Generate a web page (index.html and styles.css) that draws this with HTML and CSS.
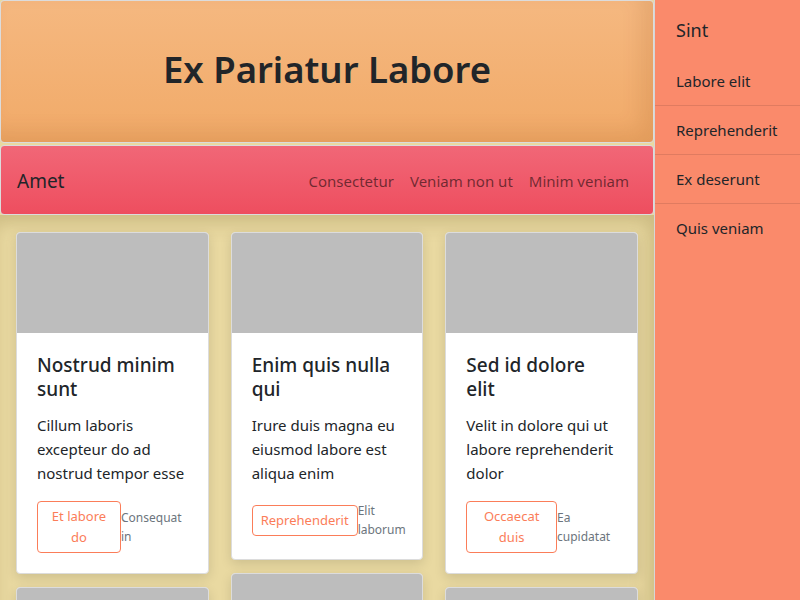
FILE: index.html
```html
<!DOCTYPE html>
<html lang="en">
<head>
    <meta charset="UTF-8">
    <meta name="viewport" content="width=device-width, initial-scale=1.0">
    <title>Ex Pariatur Labore</title>
    <link rel="stylesheet" href="styles.css">
</head>
<body>

<div class="page">
    <div class="main">
        <header class="hero">
            <h1>Ex Pariatur Labore</h1>
        </header>

        <nav class="navbar">
            <a class="brand" href="#">Amet</a>
            <div class="nav-links">
                <a href="#">Consectetur</a>
                <a href="#">Veniam non ut</a>
                <a href="#">Minim veniam</a>
            </div>
        </nav>

        <div class="content">
            <div class="column">
                <div class="card">
                    <div class="card-img"></div>
                    <div class="card-body">
                        <h5>Nostrud minim sunt</h5>
                        <p>Cillum laboris excepteur do ad nostrud tempor esse</p>
                        <div class="card-footer">
                            <button class="btn">Et labore do</button>
                            <small>Consequat in</small>
                        </div>
                    </div>
                </div>
                <div class="card">
                    <div class="card-img"></div>
                </div>
            </div>

            <div class="column">
                <div class="card">
                    <div class="card-img"></div>
                    <div class="card-body">
                        <h5>Enim quis nulla qui</h5>
                        <p>Irure duis magna eu eiusmod labore est aliqua enim</p>
                        <div class="card-footer">
                            <button class="btn">Reprehenderit</button>
                            <small>Elit laborum</small>
                        </div>
                    </div>
                </div>
                <div class="card">
                    <div class="card-img"></div>
                </div>
            </div>

            <div class="column">
                <div class="card">
                    <div class="card-img"></div>
                    <div class="card-body">
                        <h5>Sed id dolore elit</h5>
                        <p>Velit in dolore qui ut labore reprehenderit dolor</p>
                        <div class="card-footer">
                            <button class="btn">Occaecat duis</button>
                            <small>Ea cupidatat</small>
                        </div>
                    </div>
                </div>
                <div class="card">
                    <div class="card-img"></div>
                </div>
            </div>
        </div>
    </div>

    <aside class="sidebar">
        <h4>Sint</h4>
        <ul>
            <li>Labore elit</li>
            <li>Reprehenderit</li>
            <li>Ex deserunt</li>
            <li>Quis veniam</li>
        </ul>
    </aside>
</div>

</body>
</html>
```

FILE: styles.css
```css
body {
    font-family: "Noto Sans", "Open Sans", sans-serif;
    margin: 0;
    color: #212529;
    background-color: #e9d9a1;
}

.page {
    display: flex;
    height: 600px;
    overflow: hidden;
}

.main {
    width: 654px;
    flex-shrink: 0;
    display: flex;
    flex-direction: column;
    gap: 2px;
}

.hero {
    flex-shrink: 0;
    box-sizing: border-box;
    height: 143px;
    padding-bottom: 6px;
    background: linear-gradient(#f5b880, #f1aa68);
    border: 1px solid #dcdcdc;
    border-radius: 4px;
    box-shadow: inset -12px -10px 20px rgba(120, 60, 0, 0.12);
    display: flex;
    justify-content: center;
    align-items: center;
}

.hero h1 {
    margin: 0;
    font-size: 36.5px;
    font-weight: 600;
}

.navbar {
    flex-shrink: 0;
    box-sizing: border-box;
    height: 70px;
    background: linear-gradient(#f16777, #ee4e5f);
    border: 1px solid #dcdcdc;
    border-radius: 4px;
    display: flex;
    align-items: center;
    justify-content: space-between;
    padding: 2px 24px 0 16px;
}

.navbar a {
    text-decoration: none;
}

.brand {
    font-size: 19px;
    color: #212529;
}

.nav-links {
    display: flex;
    gap: 16px;
}

.nav-links a {
    font-size: 15px;
    color: rgba(0, 0, 0, 0.55);
}

.content {
    flex: 1;
    display: grid;
    grid-template-columns: repeat(3, 1fr);
    align-items: start;
    gap: 22px;
    padding: 17px 16px 0;
    margin-top: -2px;
    box-shadow: inset -6px 8px 18px rgba(120, 100, 40, 0.25);
}

.column {
    min-width: 0;
    display: flex;
    flex-direction: column;
    gap: 13px;
}

.card {
    background-color: white;
    border: 1px solid #dcdcdc;
    border-radius: 4px;
    overflow: hidden;
    box-shadow: 0 4px 12px rgba(0, 0, 0, 0.12);
}

.card-img {
    height: 100px;
    background-color: #bdbdbd;
}

.card-body {
    padding: 20px;
}

.card-body h5 {
    margin: 0 0 12px;
    font-size: 19px;
    font-weight: 500;
    line-height: 24px;
}

.card-body p {
    margin: 0 0 16px;
    font-size: 15px;
    line-height: 24px;
}

.card-footer {
    display: flex;
    align-items: center;
}

.btn {
    font-family: inherit;
    font-size: 13px;
    line-height: 21px;
    padding: 4px 8px;
    color: #fb7d59;
    background: none;
    border: 1px solid #fb7d59;
    border-radius: 4px;
}

.card-footer small {
    font-size: 12px;
    line-height: 19px;
    color: #6c757d;
}

.sidebar {
    flex: 1;
    background-color: #fa8a6b;
    border-left: 1px solid #d6d6d6;
    padding-top: 16px;
}

.sidebar h4 {
    margin: 0 0 13px;
    padding: 0 21px;
    font-size: 18px;
    font-weight: 400;
    line-height: 28px;
}

.sidebar ul {
    list-style: none;
    margin: 0;
    padding: 0;
}

.sidebar li {
    padding: 12px 21px;
    font-size: 15px;
    line-height: 24px;
    border-bottom: 1px solid rgba(0, 0, 0, 0.1);
}

.sidebar li:last-child {
    border-bottom: none;
}
```
